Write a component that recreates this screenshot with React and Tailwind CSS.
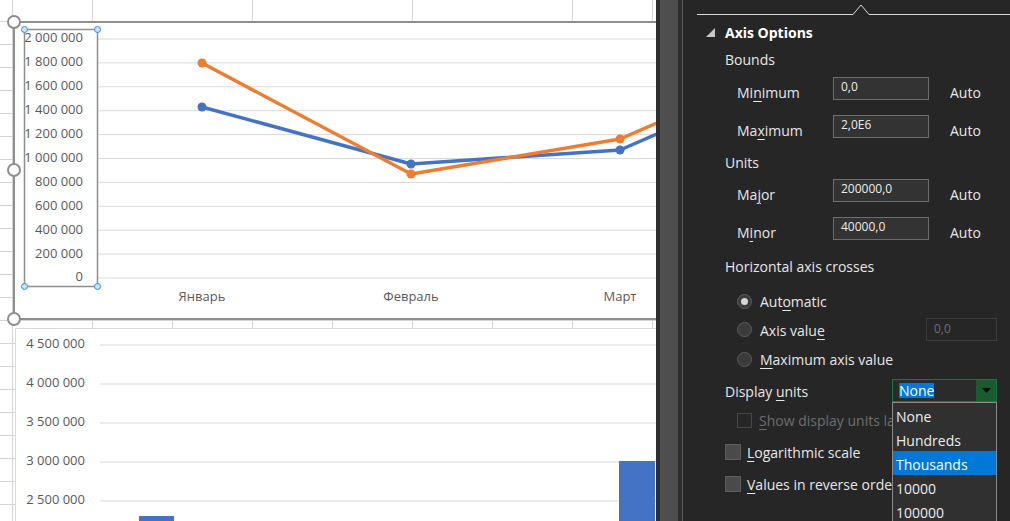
import React from "react";

const gridLine = "border-[#d4d4d4]";

function SheetGrid() {
  const rows = Array.from({ length: 22 });
  const cols = Array.from({ length: 10 });
  return (
    <div className="flex flex-col">
      <div className="grid h-[22px] grid-cols-[13px_80px_160px_160px_160px_80px_3px]">
        {Array.from({ length: 7 }).map((_, i) => (
          <div key={i} className={`border-b ${i < 6 ? "border-r" : ""} ${gridLine}`} />
        ))}
      </div>
      {rows.map((_, r) => (
        <div key={r} className="grid h-[23px] grid-cols-[13px_repeat(8,80px)_3px]">
          {cols.map((_, c) => (
            <div key={c} className={`border-b ${c < 9 ? "border-r" : ""} ${gridLine}`} />
          ))}
        </div>
      ))}
    </div>
  );
}

const chartFont = { fontFamily: '"Open Sans", "Liberation Sans", sans-serif' };

function LineChart() {
  const ticks = ["2 000 000", "1 800 000", "1 600 000", "1 400 000", "1 200 000", "1 000 000", "800 000", "600 000", "400 000", "200 000", "0"];
  const cats = [
    { x: 188, label: "Январь" },
    { x: 397, label: "Февраль" },
    { x: 606, label: "Март" },
  ];
  const orange = [[188, 41], [397, 152], [606, 117], [680, 85]];
  const blue = [[188, 85], [397, 142], [606, 128], [680, 96]];
  const pts = (arr) => arr.map((p) => p.join(",")).join(" ");
  return (
    <div className="absolute left-[14px] top-[22px] h-[298px] w-[680px] bg-white">
      <svg width="680" height="298" overflow="visible" className="block" style={chartFont}>
        {ticks.map((t, i) => (
          <line key={t} x1="84" x2="680" y1={17 + i * 23.9} y2={17 + i * 23.9} stroke="#d9d9d9" strokeWidth="1" />
        ))}
        {ticks.map((t, i) => (
          <text key={t} x="69" y={17 + i * 23.9} textAnchor="end" dominantBaseline="middle" fontSize="13" fill="#595959">
            {t}
          </text>
        ))}
        {cats.map((c) => (
          <text key={c.label} x={c.x} y="276" textAnchor="middle" dominantBaseline="middle" fontSize="13" fill="#595959">
            {c.label}
          </text>
        ))}
        <polyline points={pts(blue)} fill="none" stroke="#4472c4" strokeWidth="3.5" strokeLinejoin="round" />
        <polyline points={pts(orange)} fill="none" stroke="#ed7d31" strokeWidth="3.5" strokeLinejoin="round" />
        {blue.slice(0, 3).map(([x, y]) => (
          <circle key={x} cx={x} cy={y} r="4.5" fill="#4472c4" />
        ))}
        {orange.slice(0, 3).map(([x, y]) => (
          <circle key={x} cx={x} cy={y} r="4.5" fill="#ed7d31" />
        ))}
        {/* chart frame */}
        <rect x="0" y="0" width="700" height="297" fill="none" stroke="#8e8e8e" strokeWidth="2" />
        {/* selected value axis */}
        <rect x="10.5" y="7.5" width="73" height="257" fill="none" stroke="#8e8e8e" strokeWidth="1.5" />
        {[[10.5, 7.5], [83.5, 7.5], [10.5, 264.5], [83.5, 264.5]].map(([x, y]) => (
          <circle key={`${x}-${y}`} cx={x} cy={y} r="3" fill="#cfe3f7" stroke="#2f8fe5" strokeWidth="1" />
        ))}
        {[0, 148, 297].map((y) => (
          <circle key={y} cx="0" cy={y} r="6" fill="#ffffff" stroke="#8e8e8e" strokeWidth="2" />
        ))}
      </svg>
    </div>
  );
}

function BarChart() {
  const ticks = ["4 500 000", "4 000 000", "3 500 000", "3 000 000", "2 500 000"];
  return (
    <div className="absolute left-[15px] top-[328px] h-[200px] w-[660px] border-l border-t border-[#d9d9d9] bg-white">
      <svg width="660" height="200" className="block" style={chartFont}>
        {ticks.map((t, i) => (
          <line key={t} x1="84" x2="660" y1={16 + i * 39} y2={16 + i * 39} stroke="#d9d9d9" strokeWidth="1" />
        ))}
        {ticks.map((t, i) => (
          <text key={t} x="69" y={16 + i * 39} textAnchor="end" dominantBaseline="middle" fontSize="13" fill="#595959">
            {t}
          </text>
        ))}
        <rect x="123" y="187" width="35" height="20" fill="#4472c4" />
        <rect x="603" y="132" width="36" height="70" fill="#4472c4" />
      </svg>
    </div>
  );
}

function U({ children }) {
  return <span className="underline decoration-1 underline-offset-[3px]">{children}</span>;
}

function NumBox({ value }) {
  return (
    <div className="flex h-[23px] w-[96px] items-center border border-[#6d6d6d] bg-[#333333] pb-[3px] pl-[7px] text-[12px] text-[#ececec]">
      {value}
    </div>
  );
}

function BoundRow({ label, value, className }) {
  return (
    <div className={`flex h-[23px] items-center pl-[54px] ${className}`}>
      <div className="mt-[7px] w-[96px]">{label}</div>
      <NumBox value={value} />
      <div className="ml-[21px] mt-[7px]">Auto</div>
    </div>
  );
}

function Radio({ checked }) {
  return (
    <div className="flex h-[15px] w-[15px] shrink-0 items-center justify-center rounded-full border border-[#5c5c5c] bg-[#3b3b3b]">
      {checked && <div className="h-[7px] w-[7px] rounded-full bg-[#d6d6d6]" />}
    </div>
  );
}

function Check({ disabled }) {
  return disabled ? (
    <div className="h-[15px] w-[15px] shrink-0 border border-[#474747]" />
  ) : (
    <div className="h-[16px] w-[16px] shrink-0 border border-[#5e5e5e] bg-[#4a4a4a]" />
  );
}

function PanelHeader() {
  return (
    <svg width="327" height="22" className="block">
      <polyline points="14,14.5 170,14.5 178,5 186,14.5 327,14.5" fill="none" stroke="#d9d9d9" strokeWidth="1" />
    </svg>
  );
}

function DisplayUnitsList() {
  const items = ["None", "Hundreds", "Thousands", "10000", "100000"];
  return (
    <div className="absolute left-[209px] top-[402px] w-[105px] border border-[#8a8a8a] bg-[#303030]">
      {items.map((it) => (
        <div
          key={it}
          className={`flex h-[24px] items-center pl-[3px] pt-[3px] text-[14px] ${it === "Thousands" ? "bg-[#0078d7] text-white" : "text-[#ececec]"}`}
        >
          {it}
        </div>
      ))}
    </div>
  );
}

function FormatPanel() {
  return (
    <div className="relative flex w-[327px] flex-col bg-[#262626] text-[14px] text-[#e6e6e6]">
      <PanelHeader />
      <div className="flex h-[20px] items-center pl-[23px]">
        <svg width="9" height="9" className="mt-[1px]">
          <polygon points="9,0 9,9 0,9" fill="#c8c8c8" />
        </svg>
        <span className="ml-[10px] font-bold text-white">Axis Options</span>
      </div>
      <div className="mt-[7px] flex h-[20px] items-center pl-[42px]">Bounds</div>
      <BoundRow className="mt-[8px]" label={<>Mi<U>n</U>imum</>} value="0,0" />
      <BoundRow className="mt-[15px]" label={<>Ma<U>x</U>imum</>} value="2,0E6" />
      <div className="mt-[14px] flex h-[20px] items-center pl-[42px]">Units</div>
      <BoundRow className="mt-[7px]" label={<>Ma<U>j</U>or</>} value="200000,0" />
      <BoundRow className="mt-[15px]" label={<>M<U>i</U>nor</>} value="40000,0" />
      <div className="mt-[16px] flex h-[20px] items-center pl-[42px]">Horizontal axis crosses</div>
      <div className="mt-[15px] flex h-[20px] items-center gap-[8px] pl-[54px]">
        <Radio checked />
        <span>
          Aut<U>o</U>matic
        </span>
      </div>
      <div className="mt-[7px] flex h-[23px] items-center pl-[54px] pr-[13px]">
        <Radio />
        <span className="ml-[8px] mt-[2px]">
          Axis valu<U>e</U>
        </span>
        <div className="ml-auto flex h-[23px] w-[71px] items-center border border-[#3d3d3d] pb-[2px] pl-[7px] text-[12px] text-[#6e6e6e]">
          0,0
        </div>
      </div>
      <div className="mt-[8px] flex h-[20px] items-center gap-[8px] pl-[54px]">
        <Radio />
        <span>
          <U>M</U>aximum axis value
        </span>
      </div>
      <div className="mt-[10px] flex h-[23px] items-center pl-[42px] pr-[13px]">
        <span className="mt-[1px]">
          Display <U>u</U>nits
        </span>
        <div className="ml-auto flex h-[23px] w-[105px] border border-[#217346] bg-[#2b2b2b]">
          <div className="flex flex-1 items-center pl-[6px]">
            <span className="bg-[#0078d7] leading-[15px] text-white">None</span>
          </div>
          <div className="flex w-[20px] items-center justify-center bg-[#185c30]">
            <svg width="9" height="5">
              <polygon points="0,0 9,0 4.5,5" fill="#0a0a0a" />
            </svg>
          </div>
        </div>
      </div>
      {/* rows below are hidden behind the open list from x=892 on */}
      <div className="mt-[8px] flex h-[20px] w-[209px] items-center gap-[7px] overflow-hidden whitespace-nowrap pl-[54px] text-[#6e6e6e]">
        <Check disabled />
        <span>
          <U>S</U>how display units label on chart
        </span>
      </div>
      <div className="mt-[12px] flex h-[20px] w-[209px] items-center gap-[6px] overflow-hidden whitespace-nowrap pl-[42px]">
        <Check />
        <span>
          <U>L</U>ogarithmic scale
        </span>
        <span className="ml-[28px] text-[#6e6e6e]">
          <U>B</U>ase
        </span>
      </div>
      <div className="mt-[12px] flex h-[20px] w-[209px] items-center gap-[6px] overflow-hidden whitespace-nowrap pl-[42px]">
        <Check />
        <span>
          <U>V</U>alues in reverse order
        </span>
      </div>
      <DisplayUnitsList />
    </div>
  );
}

export default function App() {
  return (
    <div className="flex h-[521px] w-[1010px] overflow-hidden bg-[#262626] font-['Open_Sans','Liberation_Sans',sans-serif]">
      <div className="relative h-full w-[656px] shrink-0 overflow-hidden bg-white">
        <SheetGrid />
        <LineChart />
        <BarChart />
      </div>
      <div className="w-[4px] shrink-0 bg-[#2d2d2d]" />
      <div className="w-[18px] shrink-0 bg-[#4e4e4e]" />
      <div className="w-[4px] shrink-0 bg-[#2d2d2d]" />
      <div className="w-[1px] shrink-0 bg-[#5a5a5a]" />
      <FormatPanel />
    </div>
  );
}
